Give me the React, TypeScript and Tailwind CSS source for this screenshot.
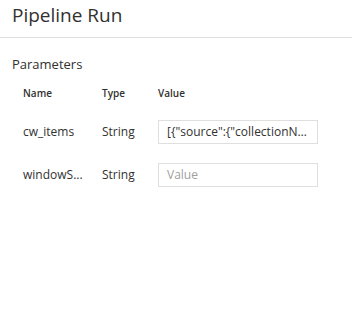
import React from 'react';

interface Param {
    name: string;
    type: string;
    value: string;
}

const params: Param[] = [
    { name: 'cw_items', type: 'String', value: '[{"source":{"collectionName":"items"}}]' },
    { name: 'windowS...', type: 'String', value: '' },
];

const ParamRow: React.FC<Param> = (props) => {
    return (
        <div className="flex items-center h-[43px]">
            <div className="w-[90px] pl-[11px] text-[12px] text-[#323130]">{props.name}</div>
            <div className="w-[56px] text-[12px] text-[#323130]">{props.type}</div>
            <div className="w-[160px] h-[24px] border border-[#e1dfdd] px-[8px] flex items-center text-[12px] overflow-hidden whitespace-nowrap">
                {props.value
                    ? <span className="text-[#323130] truncate">{props.value}</span>
                    : <span className="text-[#a19f9d]">Value</span>}
            </div>
        </div>
    );
};

const App: React.FC = () => {
    return (
        <div className="w-[352px] h-[313px] bg-white font-['Segoe_UI','Open_Sans',sans-serif]">
            <div className="h-[38px] border-b border-[#e1dfdd] px-[12px] pt-[1px]">
                <span className="text-[19px] text-[#323130] leading-[28px]">Pipeline Run</span>
            </div>
            <div className="px-[12px] pt-[16px]">
                <div className="text-[13px] text-[#323130] leading-[20px]">Parameters</div>
                <div className="flex items-start h-[36px] pt-[12px] text-[10px] leading-[15px] font-semibold text-[#323130]">
                    <div className="w-[90px] pl-[11px]">Name</div>
                    <div className="w-[56px]">Type</div>
                    <div>Value</div>
                </div>
                {params.map((p) => (
                    <ParamRow key={p.name} name={p.name} type={p.type} value={p.value} />
                ))}
            </div>
        </div>
    );
};

export default App;
